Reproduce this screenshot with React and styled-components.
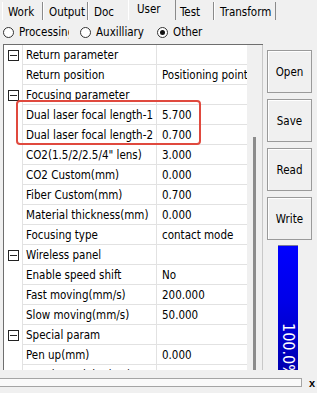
import React from "react";
import styled, { createGlobalStyle } from "styled-components";

const Global = createGlobalStyle`
  html, body { margin: 0; padding: 0; background: #f0f0f0; }
  * { box-sizing: border-box; }
`;

const FONT = `"DejaVu Sans Condensed", "Liberation Sans", sans-serif`;

const Window = styled.div`
  width: 317px;
  height: 393px;
  background: #f0f0f0;
  overflow: hidden;
  display: flex;
  flex-direction: column;
  font-family: ${FONT};
  font-size: 11.5px;
  color: #000;
`;

const TabBar = styled.div`
  height: 20px;
  display: flex;
  align-items: flex-end;
  padding-left: 2px;
`;

const Tab = styled.div`
  flex: none;
  width: ${(p) => p.$w}px;
  height: ${(p) => (p.$active ? 20 : 18)}px;
  margin: ${(p) => (p.$active ? "0 -2px" : "0")};
  padding: ${(p) => (p.$active ? "2px 0 0 8px" : "3px 0 0 5px")};
  position: relative;
  z-index: ${(p) => (p.$active ? 1 : 0)};
  background: #f0f0f0;
  border-left: 1px solid #ffffff;
  border-right: 1px solid #8a8a8a;
  white-space: nowrap;
  overflow: hidden;
`;

const RadioRow = styled.div`
  height: 24px;
  display: grid;
  grid-template-columns: 66px 66px 60px;
  column-gap: 11px;
  align-items: center;
  padding-left: 3px;
`;

const RadioItem = styled.div`
  display: flex;
  align-items: center;
  gap: 5px;
  overflow: hidden;
  white-space: nowrap;
`;

const RadioCircle = styled.span`
  flex: none;
  width: 11px;
  height: 11px;
  border-radius: 50%;
  border: 1px solid #333;
  background: #fff;
  display: flex;
  align-items: center;
  justify-content: center;
  &::after {
    content: "";
    width: 5px;
    height: 5px;
    border-radius: 50%;
    background: ${(p) => (p.$checked ? "#111" : "transparent")};
  }
`;

const Main = styled.div`
  height: 326px;
  display: flex;
`;

const GridPanel = styled.div`
  margin-left: 3px;
  width: 260px;
  height: 326px;
  border-left: 1px solid #6e6e6e;
  border-top: 1px solid #6e6e6e;
  display: flex;
  position: relative;
  overflow: hidden;
`;

const Rows = styled.div`
  width: 243px;
  background: #fff;
  display: flex;
  flex-direction: column;
`;

const Row = styled.div`
  display: flex;
  height: 20px;
  flex: none;
`;

const IconCell = styled.div`
  width: 19px;
  display: flex;
  align-items: center;
  justify-content: center;
  border-right: 1px solid #e2e2e2;
`;

const Expander = styled.span`
  width: 11px;
  height: 11px;
  border: 1px solid #222;
  display: flex;
  align-items: center;
  justify-content: center;
  &::after {
    content: "";
    width: 7px;
    height: 1px;
    background: #222;
  }
`;

const NameCell = styled.div`
  width: 134px;
  padding-left: 3px;
  border-right: 1px solid #e2e2e2;
  border-bottom: 1px solid #e2e2e2;
  display: flex;
  align-items: center;
  white-space: nowrap;
  overflow: hidden;
`;

const ValueCell = styled.div`
  width: 90px;
  padding-left: 5px;
  border-bottom: 1px solid #e2e2e2;
  display: flex;
  align-items: center;
  white-space: nowrap;
  overflow: hidden;
`;

const ScrollTrack = styled.div`
  width: 16px;
  background: #f0f0f0;
  border-right: 1px solid #c8c8c8;
  display: flex;
  flex-direction: column;
  align-items: center;
  padding-top: 92px;
`;

const ScrollThumb = styled.div`
  width: 3px;
  flex: 1;
  background: #8c8c8c;
  margin-left: -1px;
`;

const Highlight = styled.div`
  position: absolute;
  left: 12px;
  top: 55px;
  width: 185px;
  height: 45px;
  border: 2.5px solid #e0493e;
  border-radius: 4px;
  pointer-events: none;
`;

const SideColumn = styled.div`
  width: 54px;
  display: flex;
  flex-direction: column;
  padding: 6px 0 0 4px;
`;

const Button = styled.div`
  width: 45px;
  height: 43px;
  margin-bottom: ${(p) => p.$gap}px;
  background: #f0f0f0;
  border: 1px solid #9a9a9a;
  box-shadow: inset 1px 1px 0 #ffffff;
  display: flex;
  align-items: center;
  justify-content: center;
  flex: none;
`;

const Progress = styled.div`
  margin: 1px 0 0 11px;
  width: 20px;
  flex: 1;
  background: linear-gradient(to bottom, #0000ff 0%, #0000e8 45%, #0000b0 100%);
  border-top: 1px solid #7a7a9a;
  color: #fff;
  font-size: 16px;
  writing-mode: vertical-rl;
  padding-top: 77px;
  display: flex;
  align-items: center;
  overflow: hidden;
  white-space: nowrap;
  line-height: 20px;
`;

const Bottom = styled.div`
  height: 23px;
  display: flex;
  align-items: center;
  padding-top: 2px;
`;

const Splitter = styled.div`
  width: 302px;
  height: 9px;
  border-top: 1px solid #a5a5a5;
  border-bottom: 1px solid #a5a5a5;
  border-right: 1px solid #a5a5a5;
  background: #fafafa;
`;

const Close = styled.span`
  margin-left: 7px;
  font-family: "Liberation Sans", sans-serif;
  font-weight: bold;
  font-size: 11px;
`;

const tabs = [
  { label: "Work", w: 41 },
  { label: "Output", w: 45 },
  { label: "Doc", w: 42 },
  { label: "User", w: 48, active: true },
  { label: "Test", w: 40 },
  { label: "Transform", w: 62 },
];

const rows = [
  { cat: true, name: "Return parameter" },
  { name: "Return position", value: "Positioning point" },
  { cat: true, name: "Focusing parameter" },
  { name: "Dual laser focal length-1", value: "5.700" },
  { name: "Dual laser focal length-2", value: "0.700" },
  { name: 'CO2(1.5/2/2.5/4" lens)', value: "3.000" },
  { name: "CO2 Custom(mm)", value: "0.000" },
  { name: "Fiber Custom(mm)", value: "0.700" },
  { name: "Material thickness(mm)", value: "0.000" },
  { name: "Focusing type", value: "contact mode" },
  { cat: true, name: "Wireless panel" },
  { name: "Enable speed shift", value: "No" },
  { name: "Fast moving(mm/s)", value: "200.000" },
  { name: "Slow moving(mm/s)", value: "50.000" },
  { cat: true, name: "Special param" },
  { name: "Pen up(mm)", value: "0.000" },
  { name: "Pen down delay(ms)", value: "0.000" },
];

export default function App() {
  return (
    <>
      <Global />
      <Window>
        <TabBar>
          {tabs.map((t) => (
            <Tab key={t.label} $w={t.w} $active={t.active}>
              {t.label}
            </Tab>
          ))}
        </TabBar>
        <RadioRow>
          <RadioItem>
            <RadioCircle />
            Processing
          </RadioItem>
          <RadioItem>
            <RadioCircle />
            Auxilliary
          </RadioItem>
          <RadioItem>
            <RadioCircle $checked />
            Other
          </RadioItem>
        </RadioRow>
        <Main>
          <GridPanel>
            <Rows>
              {rows.map((r) => (
                <Row key={r.name}>
                  <IconCell>{r.cat && <Expander />}</IconCell>
                  <NameCell>{r.name}</NameCell>
                  <ValueCell>{r.value || ""}</ValueCell>
                </Row>
              ))}
            </Rows>
            <ScrollTrack>
              <ScrollThumb />
            </ScrollTrack>
            <Highlight />
          </GridPanel>
          <SideColumn>
            <Button $gap={6}>Open</Button>
            <Button $gap={6}>Save</Button>
            <Button $gap={6}>Read</Button>
            <Button $gap={4}>Write</Button>
            <Progress>100.0%</Progress>
          </SideColumn>
        </Main>
        <Bottom>
          <Splitter />
          <Close>x</Close>
        </Bottom>
      </Window>
    </>
  );
}
